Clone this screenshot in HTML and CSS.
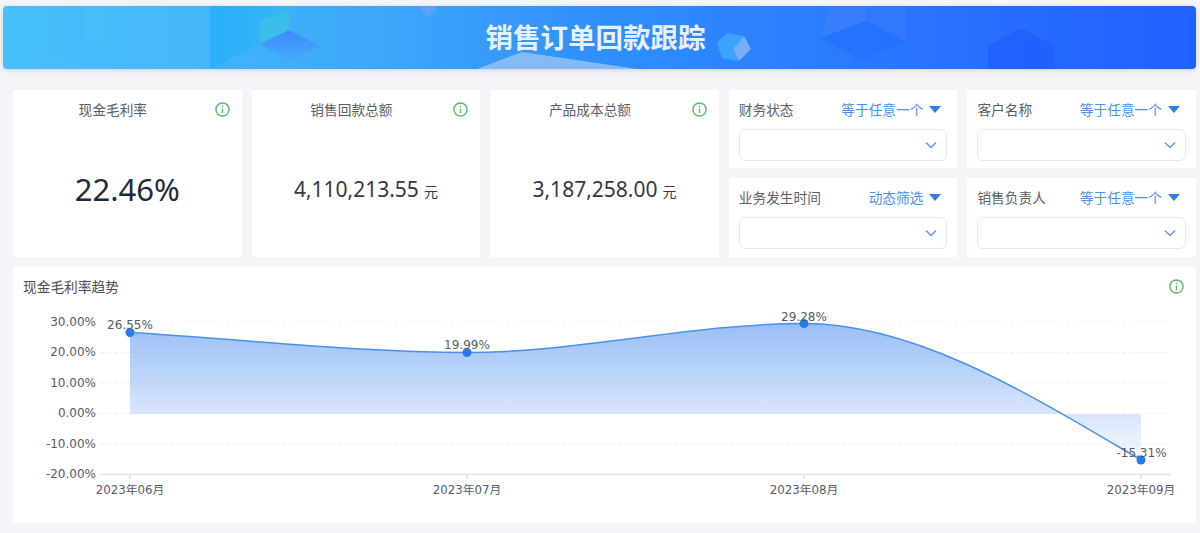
FILE: index.html
```html
<!DOCTYPE html>
<html lang="zh-CN">
<head>
  <meta charset="UTF-8">
  <meta name="viewport" content="width=device-width, initial-scale=1.0">
  <title>销售订单回款跟踪</title>
  <link rel="stylesheet" href="styles.css">
</head>
<body>
  <header class="banner">
    <svg class="banner-art" viewBox="3 6 1193 63" preserveAspectRatio="none" aria-hidden="true">
      <polygon points="20,69 83,40 145,69" fill="#4dbcfb" opacity="0.35"/>
      <polygon points="83,6 210,6 210,69 145,69 83,40" fill="#ffffff" opacity="0.03"/>
      <polygon points="210,6 289,6 289,30 210,69" fill="url(#panel)"/>
      <polygon points="260,20 289,11 289,30 260,44" fill="#43c3e2" opacity="0.55"/>
      <polygon points="260,44 289,30 320,46 291,61" fill="url(#diamond)" opacity="0.85"/>
      <polygon points="418,6 436,6 436,10 427,18" fill="#6aa2fa" opacity="0.7"/>
      <polygon points="477,69 522,52 637,69" fill="#86baf5"/>
      <polygon points="717,43 727,33 744,36 733,49 739,61 722,58" fill="#3aa3fd"/>
      <polygon points="744,36 751,49 739,61 733,49" fill="#76aef8"/>
      <polygon points="830,6 866,6 866,21 820,38" fill="#3c80fb" opacity="0.7"/>
      <polygon points="866,6 906,6 906,42 866,21" fill="#3379fb" opacity="0.7"/>
      <polygon points="820,38 866,21 906,42 862,60" fill="#2470fb" opacity="0.8"/>
      <polygon points="988,69 988,46 1021,28 1055,46 1055,69" fill="#1f5ffe" opacity="0.8"/>
      <defs>
        <linearGradient id="panel" x1="0" y1="0" x2="1" y2="0">
          <stop offset="0" stop-color="#2cadfd"/>
          <stop offset="1" stop-color="#35b8f0"/>
        </linearGradient>
        <linearGradient id="diamond" x1="0" y1="0" x2="0" y2="1">
          <stop offset="0" stop-color="#3d84fb"/>
          <stop offset="1" stop-color="#46aafb"/>
        </linearGradient>
      </defs>
    </svg>
    <h1 class="banner-title">销售订单回款跟踪</h1>
  </header>

  <main class="dashboard">
    <section class="card stat">
      <div class="stat-head">
        <h2 class="stat-title">现金毛利率</h2>
        <svg class="info" viewBox="0 0 16 16"><circle cx="8" cy="8" r="7"/><path d="M8 7v5M8 4v1.6"/></svg>
      </div>
      <div class="stat-value stat-value-big">22.46%</div>
    </section>

    <section class="card stat">
      <div class="stat-head">
        <h2 class="stat-title">销售回款总额</h2>
        <svg class="info" viewBox="0 0 16 16"><circle cx="8" cy="8" r="7"/><path d="M8 7v5M8 4v1.6"/></svg>
      </div>
      <div class="stat-value">4,110,213.55<span class="unit">元</span></div>
    </section>

    <section class="card stat">
      <div class="stat-head">
        <h2 class="stat-title">产品成本总额</h2>
        <svg class="info" viewBox="0 0 16 16"><circle cx="8" cy="8" r="7"/><path d="M8 7v5M8 4v1.6"/></svg>
      </div>
      <div class="stat-value">3,187,258.00<span class="unit">元</span></div>
    </section>

    <section class="card filter">
      <div class="filter-head">
        <span class="filter-label">财务状态</span>
        <span class="filter-mode">等于任意一个<i class="caret"></i></span>
      </div>
      <div class="select"><svg class="chevron" viewBox="0 0 12 8"><path d="M1 1.5l5 5 5-5"/></svg></div>
    </section>

    <section class="card filter">
      <div class="filter-head">
        <span class="filter-label">客户名称</span>
        <span class="filter-mode">等于任意一个<i class="caret"></i></span>
      </div>
      <div class="select"><svg class="chevron" viewBox="0 0 12 8"><path d="M1 1.5l5 5 5-5"/></svg></div>
    </section>

    <section class="card filter">
      <div class="filter-head">
        <span class="filter-label">业务发生时间</span>
        <span class="filter-mode">动态筛选<i class="caret"></i></span>
      </div>
      <div class="select"><svg class="chevron" viewBox="0 0 12 8"><path d="M1 1.5l5 5 5-5"/></svg></div>
    </section>

    <section class="card filter">
      <div class="filter-head">
        <span class="filter-label">销售负责人</span>
        <span class="filter-mode">等于任意一个<i class="caret"></i></span>
      </div>
      <div class="select"><svg class="chevron" viewBox="0 0 12 8"><path d="M1 1.5l5 5 5-5"/></svg></div>
    </section>

    <section class="card trend">
      <div class="trend-head">
        <h2 class="trend-title">现金毛利率趋势</h2>
        <svg class="info" viewBox="0 0 16 16"><circle cx="8" cy="8" r="7"/><path d="M8 7v5M8 4v1.6"/></svg>
      </div>
      <svg class="trend-chart" viewBox="13 307 1183 206">
        <defs>
          <linearGradient id="area" gradientUnits="userSpaceOnUse" x1="0" y1="323" x2="0" y2="462">
            <stop offset="0" stop-color="#2a78ee" stop-opacity="0.48"/>
            <stop offset="1" stop-color="#2a78ee" stop-opacity="0.03"/>
          </linearGradient>
        </defs>

        <g class="grid">
          <line x1="100" x2="1171" y1="322" y2="322"/>
          <line x1="100" x2="1171" y1="352.5" y2="352.5"/>
          <line x1="100" x2="1171" y1="383" y2="383"/>
          <line x1="100" x2="1171" y1="413.5" y2="413.5"/>
          <line x1="100" x2="1171" y1="444" y2="444"/>
        </g>
        <line class="axis" x1="100" x2="1171" y1="474.5" y2="474.5"/>
        <g class="tick">
          <line x1="130" x2="130" y1="475" y2="479"/>
          <line x1="467" x2="467" y1="475" y2="479"/>
          <line x1="804" x2="804" y1="475" y2="479"/>
          <line x1="1141" x2="1141" y1="475" y2="479"/>
        </g>

        <path class="area" d="M130 332.5C242 339 355 352.5 467 352.5C579 352.5 692 323.5 804 323.5C916 323.5 1029 394 1141 460L1141 414L130 414Z"/>
        <path class="line" d="M130 332.5C242 339 355 352.5 467 352.5C579 352.5 692 323.5 804 323.5C916 323.5 1029 394 1141 460"/>

        <g class="dots">
          <circle cx="130" cy="332.5" r="4.5"/>
          <circle cx="467" cy="352.5" r="4.5"/>
          <circle cx="804" cy="323.5" r="4.5"/>
          <circle cx="1141" cy="460" r="4.5"/>
        </g>

        <g class="labels">
          <text x="130" y="329">26.55%</text>
          <text x="467" y="349">19.99%</text>
          <text x="804" y="320.5">29.28%</text>
          <text x="1141.5" y="457">-15.31%</text>
        </g>

        <g class="y-labels">
          <text x="96" y="325.5">30.00%</text>
          <text x="96" y="356">20.00%</text>
          <text x="96" y="386.5">10.00%</text>
          <text x="96" y="417">0.00%</text>
          <text x="96" y="447.5">-10.00%</text>
          <text x="96" y="478">-20.00%</text>
        </g>

        <g class="x-labels">
          <text x="130" y="493.5">2023年06月</text>
          <text x="467" y="493.5">2023年07月</text>
          <text x="804" y="493.5">2023年08月</text>
          <text x="1141" y="493.5">2023年09月</text>
        </g>
      </svg>
    </section>
  </main>
</body>
</html>
```

FILE: styles.css
```css
/* page */
body {
  margin: 0;
  padding: 6px 4px 0 3px;
  height: 533px;
  box-sizing: border-box;
  overflow: hidden;
  background-color: #f4f5f9;
  font-family: "Noto Sans", "Noto Sans CJK SC", sans-serif;
  color: #5a5e66;
}

h1, h2 {
  margin: 0;
  font-weight: normal;
}

/* banner */
.banner {
  position: relative;
  height: 63px;
  display: flex;
  align-items: center;
  justify-content: center;
  overflow: hidden;
  border-radius: 4px;
  background: linear-gradient(90deg, #46c1f9 0%, #3ea9fb 30%, #2f8ffd 50%, #2a75ff 75%, #2060ff 100%);
  box-shadow: 0 1px 4px rgba(60, 90, 160, 0.25);
}

.banner-art {
  position: absolute;
  left: 0;
  top: 0;
  width: 100%;
  height: 100%;
}

.banner-title {
  position: relative;
  padding: 0 8px 4px 0;
  font-size: 27.5px;
  font-weight: bold;
  color: #e6f0ff;
}

/* grid of cards */
.dashboard {
  display: grid;
  grid-template-columns: repeat(5, 1fr);
  grid-template-rows: 78px 79px 256px;
  gap: 10px;
  margin: 21px 0 0 10px;
}

.card {
  background-color: #fff;
  min-width: 0;
}

/* number cards */
.stat {
  grid-row: span 2;
}

.stat-head {
  display: flex;
  align-items: center;
  height: 38px;
  padding-right: 12px;
}

.stat-title {
  flex: 1;
  padding-right: 2px;
  font-size: 13.7px;
  text-align: center;
}

.info {
  flex: none;
  width: 15px;
  height: 15px;
  fill: none;
  stroke: #5cb96f;
  stroke-width: 1.5;
}

.stat-value {
  height: 122px;
  display: flex;
  align-items: center;
  justify-content: center;
  font-size: 21px;
  color: #333a47;
}

.stat-value-big {
  font-size: 31px;
  color: #1f2a3d;
}

.unit {
  margin: 3px 0 0 5px;
  font-size: 14px;
}

/* filter cards */
.filter {
  padding: 0 10px;
}

.filter-head {
  display: flex;
  align-items: center;
  justify-content: space-between;
  height: 38px;
  margin-bottom: 1px;
  font-size: 13.7px;
}

.filter-mode {
  display: flex;
  align-items: center;
  color: #4a90f0;
}

.caret {
  width: 0;
  height: 0;
  margin: 0 6px 0 6px;
  border-left: 6px solid transparent;
  border-right: 6px solid transparent;
  border-top: 7px solid #2f7bec;
}

.select {
  display: flex;
  align-items: center;
  justify-content: flex-end;
  height: 32px;
  padding-right: 9px;
  box-sizing: border-box;
  border: 1px solid #e6e8ec;
  border-radius: 6px;
}

.chevron {
  width: 12px;
  height: 8px;
  fill: none;
  stroke: #5b97f2;
  stroke-width: 1.4;
}

/* trend chart */
.trend {
  grid-column: 1 / -1;
}

.trend-head {
  display: flex;
  align-items: center;
  justify-content: space-between;
  height: 38px;
  margin-bottom: 2px;
  padding: 0 12px 0 10px;
}

.trend-title {
  font-size: 13.7px;
  color: #4a4e55;
}

.trend-chart {
  display: block;
  width: 1183px;
  height: 206px;
}

.trend-chart text {
  font-family: "DejaVu Sans", "Noto Sans CJK SC", sans-serif;
  font-size: 12px;
  fill: #555b66;
}

.trend-chart .x-labels text {
  font-size: 11.8px;
}

.grid line {
  stroke: #eef0f3;
  stroke-dasharray: 4 3;
}

.axis {
  stroke: #dfe2ea;
  stroke-width: 1.5;
}

.tick line {
  stroke: #c9cdd6;
}

.area {
  fill: url(#area);
}

.line {
  fill: none;
  stroke: #4a8ff2;
  stroke-width: 1.5;
}

.dots circle {
  fill: #2a78ee;
}

.labels text,
.x-labels text {
  text-anchor: middle;
}

.y-labels text {
  text-anchor: end;
}
```
